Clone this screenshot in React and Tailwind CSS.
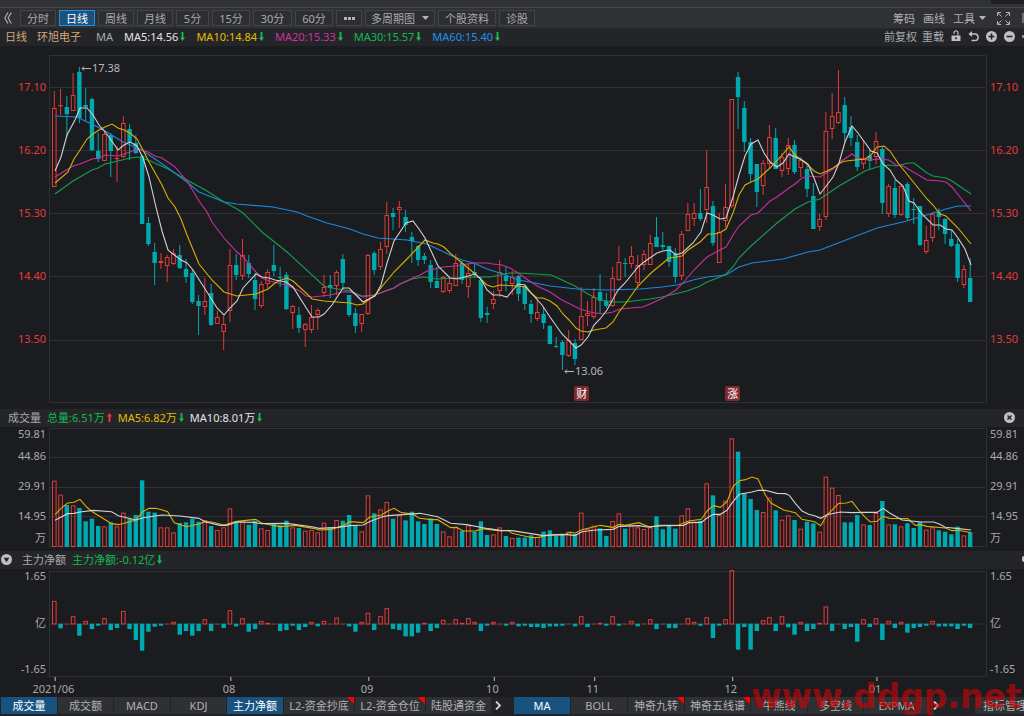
import React from "react";

const RED = "#e23b38";
const TEAL = "#00a9af";

// [rising, high, body top, body bottom, low]
const CANDLES = [
  [1, 91, 108, 187, 187], [1, 89, 105, 106, 115], [0, 96, 107, 114, 137], [1, 73, 95, 111, 111], [0, 67, 72, 118, 123],
  [0, 88, 105, 107, 121], [0, 98, 99, 150, 151], [0, 133, 151, 159, 162], [1, 132, 134, 161, 161], [0, 133, 135, 151, 177],
  [1, 146, 158, 159, 182], [1, 116, 123, 157, 158], [0, 124, 129, 143, 160], [0, 135, 143, 153, 154], [0, 155, 156, 224, 224],
  [0, 217, 223, 244, 246], [0, 243, 252, 263, 285], [1, 253, 261, 263, 269], [1, 255, 257, 266, 282], [1, 249, 253, 264, 265],
  [0, 245, 255, 268, 269], [0, 259, 269, 277, 283], [0, 269, 273, 302, 304], [0, 295, 301, 306, 335], [1, 278, 301, 307, 315],
  [0, 284, 293, 325, 326], [1, 311, 317, 324, 324], [1, 316, 324, 332, 350], [1, 249, 265, 311, 322], [0, 254, 265, 275, 280],
  [1, 239, 255, 276, 280], [0, 255, 263, 274, 278], [0, 273, 280, 299, 310], [1, 281, 284, 306, 308], [1, 269, 272, 284, 288],
  [0, 245, 265, 271, 276], [0, 267, 277, 278, 287], [0, 272, 275, 309, 310], [1, 305, 306, 313, 329], [0, 307, 315, 328, 333],
  [1, 323, 324, 330, 347], [1, 305, 317, 330, 333], [1, 308, 310, 315, 330], [1, 275, 287, 293, 297], [0, 275, 285, 288, 298],
  [1, 270, 272, 286, 295], [0, 254, 259, 283, 289], [0, 295, 295, 315, 317], [0, 308, 313, 326, 333], [1, 314, 314, 324, 332],
  [1, 254, 255, 314, 315], [0, 251, 253, 270, 275], [1, 242, 249, 267, 270], [1, 202, 215, 247, 254], [0, 208, 213, 217, 230],
  [1, 201, 207, 210, 228], [0, 210, 217, 225, 232], [0, 232, 237, 241, 263], [0, 245, 246, 260, 266], [0, 253, 256, 260, 264],
  [0, 260, 265, 282, 288], [0, 267, 281, 288, 288], [1, 276, 277, 292, 293], [1, 277, 283, 291, 293], [1, 254, 263, 286, 286],
  [0, 261, 263, 280, 284], [1, 263, 273, 287, 298], [0, 263, 272, 274, 278], [0, 277, 280, 318, 322], [0, 307, 313, 315, 323],
  [1, 291, 299, 304, 309], [1, 260, 272, 291, 297], [0, 267, 276, 281, 291], [1, 271, 277, 284, 295], [0, 275, 276, 294, 301],
  [0, 285, 286, 304, 310], [0, 300, 304, 314, 323], [1, 300, 312, 319, 321], [0, 307, 314, 323, 329], [0, 325, 326, 344, 344],
  [0, 337, 346, 347, 348], [0, 340, 342, 355, 370], [1, 330, 340, 356, 357], [0, 339, 343, 359, 365], [1, 287, 316, 340, 340],
  [1, 301, 313, 316, 326], [1, 288, 297, 317, 319], [0, 274, 292, 301, 314], [0, 293, 301, 306, 308], [1, 267, 278, 306, 307],
  [1, 246, 262, 280, 281], [0, 258, 263, 264, 277], [1, 246, 256, 264, 268], [1, 255, 265, 283, 288], [1, 250, 254, 265, 270],
  [1, 235, 243, 265, 265], [0, 217, 237, 247, 247], [0, 232, 245, 247, 250], [0, 246, 246, 262, 267], [0, 248, 253, 277, 283],
  [1, 231, 234, 276, 280], [1, 203, 214, 231, 231], [1, 203, 213, 219, 226], [0, 189, 213, 219, 221], [1, 150, 187, 210, 223],
  [0, 201, 206, 243, 246], [1, 213, 232, 263, 263], [1, 184, 207, 221, 227], [1, 99, 99, 206, 208], [0, 72, 77, 97, 129],
  [0, 101, 108, 142, 152], [0, 138, 142, 174, 182], [0, 164, 164, 192, 207], [1, 160, 163, 186, 195], [1, 125, 137, 164, 169],
  [0, 128, 138, 169, 169], [1, 153, 157, 171, 177], [1, 138, 145, 169, 175], [0, 140, 145, 172, 174], [1, 157, 160, 168, 177],
  [0, 165, 169, 189, 197], [0, 183, 196, 229, 229], [1, 214, 219, 227, 231], [1, 112, 131, 217, 220], [1, 93, 116, 129, 139],
  [1, 70, 112, 123, 124], [0, 97, 105, 133, 142], [0, 116, 127, 138, 146], [0, 135, 142, 167, 171], [1, 140, 159, 164, 169],
  [0, 150, 156, 161, 170], [1, 132, 141, 157, 164], [0, 146, 149, 203, 214], [1, 184, 186, 214, 217], [0, 180, 188, 215, 218],
  [1, 184, 186, 215, 216], [0, 182, 184, 218, 220], [0, 198, 209, 210, 224], [0, 206, 206, 245, 246], [1, 226, 240, 252, 254],
  [1, 212, 214, 238, 242], [0, 208, 212, 217, 230], [0, 218, 219, 234, 244], [0, 230, 239, 246, 247], [0, 239, 244, 278, 282],
  [1, 265, 269, 285, 288], [0, 258, 278, 302, 302],
];

// tops of the volume bars, three units to a pixel
const VOLUMES = [
  227, 269, 300, 301, 309, 349, 341, 363, 364, 352, 364, 323, 341, 330, 226, 320, 323, 367, 367, 382,
  354, 352, 341, 350, 345, 363, 375, 367, 310, 349, 348, 359, 347, 370, 375, 356, 361, 347, 367, 369,
  377, 375, 382, 353, 367, 345, 347, 330, 361, 379, 271, 325, 313, 291, 341, 330, 346, 320, 349, 357,
  340, 357, 379, 394, 367, 378, 361, 380, 349, 390, 388, 367, 393, 399, 398, 398, 391, 396, 380, 376,
  392, 390, 380, 387, 323, 371, 362, 370, 393, 348, 325, 371, 362, 367, 372, 367, 334, 373, 360, 371,
  331, 310, 350, 347, 235, 271, 330, 287, 100, 140, 265, 282, 315, 321, 278, 316, 344, 331, 345, 371,
  350, 355, 380, 215, 248, 270, 352, 352, 330, 358, 360, 324, 288, 358, 358, 364, 355, 369, 351, 374,
  367, 376, 380, 388, 365, 391, 382,
];

// net inflow bars, three units to a pixel, 0 and above are red
const FLOWS = [
  68, -14, 0, 22, -36, 8, -16, -6, 16, -19, -13, 38, -16, -49, -81, -24, -9, -5, 0, 5,
  -33, -22, -36, -22, 13, -22, 0, -13, 40, -8, 16, -24, -16, 8, 2, 0, -22, -19, -5, -19,
  -10, 5, -8, 8, 0, 18, 0, -8, -24, 5, 32, -19, 22, 46, -16, -19, -38, -38, -27, 2,
  -22, -13, 11, 0, 13, 2, 16, 5, -22, -5, 5, 0, -5, 5, -8, -6, -10, -10, -13, -8,
  -8, -5, 0, -8, 22, -10, 0, 2, -5, 22, -5, 0, 8, -8, 0, 13, -16, 0, -13, -13,
  0, 16, 5, -5, 19, -43, -5, 13, 160, -78, -10, -78, -22, 10, 19, -22, 22, -11, -33, 5,
  -22, -16, 2, 51, -22, 0, -16, -10, -54, 13, -10, 16, -49, 8, -13, 5, -27, -13, -10, -5,
  8, -8, -8, -8, -16, -5, -13,
];

const PRICE_LINES = [
  { color: "#12a14b", points: "55,194 73,181 80,177 92,170 98,168 105,164 118,161 130,158 137,157 148,160 168,169 187,180 207,191 224,202 237,209 243,213 262,232 287,252 324,286 332,288 350,291 362,296 375,295 394,288 400,284 412,279 423,277 437,279 474,277 490,277 500,275 510,273 518,273 535,274 551,275 562,280 575,286 588,294 600,300 613,302 625,302 650,299 662,297 687,291 700,286 707,282 720,277 726,274 733,267 739,258 751,246 777,223 795,209 808,202 820,199 839,186 865,171 877,167 889,165 896,166 908,163 914,163 927,173 933,176 946,178 952,181 971,194" },
  { color: "#1e87dc", points: "55,116 77,117 85,121 92,124 105,131 123,142 140,149 155,159 168,168 187,182 199,192 224,202 237,204 273,207 297,212 307,216 327,223 350,229 363,234 378,238 407,240 427,244 450,255 462,260 474,263 487,269 503,274 518,280 530,282 550,286 577,289 607,290 640,289 662,287 677,285 693,280 707,277 726,275 739,267 752,263 783,259 808,252 820,250 846,240 877,228 903,222 920,217 946,209 958,206 971,206" },
  { color: "#c9309c", points: "55,177 68,169 73,166 80,164 92,159 99,158 105,155 118,156 130,152 137,149 148,152 155,156 162,158 175,167 187,181 199,201 207,212 212,222 224,238 237,252 243,257 256,272 262,278 269,281 286,285 300,291 306,296 313,297 330,295 342,292 350,292 363,297 375,295 385,291 394,288 400,284 413,278 420,275 427,271 443,267 455,266 474,263 487,263 493,264 502,265 510,268 518,273 531,282 537,286 550,292 562,300 580,309 590,312 602,314 613,312 620,309 630,308 643,307 650,304 663,298 676,290 682,284 694,270 707,257 720,250 726,247 733,235 739,226 751,215 758,213 770,201 777,197 789,188 795,184 802,178 808,176 820,177 833,169 840,162 852,154 858,158 871,160 877,159 889,160 896,165 903,166 927,180 940,181 946,182 952,187 971,211" },
  { color: "#d9b000", points: "55,183 68,172 74,159 80,150 87,139 93,134 99,130 105,127 112,124 118,128 124,130 130,133 137,139 143,150 149,162 162,185 168,198 175,207 181,219 187,235 199,264 212,280 224,292 237,296 256,294 268,289 275,283 281,280 287,278 293,281 305,292 312,299 324,301 350,303 357,305 363,304 375,295 394,272 407,259 425,240 433,243 438,244 444,247 450,253 462,263 474,273 487,285 493,287 500,285 518,286 525,287 530,292 537,298 543,298 550,301 557,306 563,314 569,320 576,328 581,331 588,332 594,330 606,328 613,322 619,312 626,303 638,286 651,273 669,258 676,257 682,256 688,250 700,242 708,234 715,234 721,232 726,229 733,213 739,195 745,185 751,182 758,179 770,168 783,154 789,147 795,155 808,165 814,171 820,174 827,171 833,168 842,162 846,161 865,159 871,155 877,147 884,146 890,151 898,163 927,199 933,205 940,214 946,216 958,228 971,244" },
  { color: "#d2d2d2", points: "55,171 61,157 67,135 75,120 80,108 87,108 93,115 99,125 106,133 111,140 118,150 124,145 130,142 137,146 143,158 149,177 155,203 162,231 168,250 173,254 181,260 187,263 193,270 207,292 217,308 224,315 230,308 237,301 243,288 256,274 262,277 269,278 275,280 286,282 293,287 305,306 312,317 319,317 324,314 332,305 343,288 349,288 355,294 363,302 369,299 375,296 381,285 387,263 394,241 406,223 413,221 419,229 425,238 432,253 438,266 450,278 457,279 468,276 475,274 481,279 487,290 493,295 500,295 507,297 513,290 518,284 525,285 531,293 542,305 550,317 562,334 576,348 581,345 588,337 594,325 600,319 607,310 618,290 625,283 638,267 644,262 657,253 663,251 670,250 676,255 682,253 693,243 701,232 707,213 713,215 720,219 726,218 733,197 739,175 745,156 751,144 758,140 764,153 770,162 777,167 783,163 789,154 795,157 802,160 808,164 814,178 820,194 827,185 833,177 839,163 845,142 852,126 858,133 871,151 877,153 883,164 890,170 896,180 903,186 909,201 914,203 921,213 933,225 940,225 946,229 952,230 958,238 965,249 971,265" },
];

const VOLUME_LINES = [
  {
    color: "#d9b000",
    left: "165,329 183,310 203,294 222,292 240,283 260,306 278,321 335,356 355,359 375,354 408,345 428,320 447,310 467,310 485,314 503,320 523,353 560,365 597,357 615,350 635,351 672,360 710,349 767,343 785,354 823,362 842,365 885,361 940,370 957,375 995,373 1033,360 1050,350 1090,353 1108,337 1145,330 1165,317 1182,310 1202,322 1240,328 1258,340 1295,344 1313,344 1352,368 1370,367 1390,378 1428,378 1445,371 1503,378 1525,376 1536,385",
    right: "0,385 60,398 80,397 115,389 155,390 175,382 190,384 210,374 265,361 303,367 322,358 340,361 380,353 415,367 435,361 500,360 530,348 568,343 588,315 605,302 625,307 645,290 663,245 682,227 700,224 720,216 738,222 760,270 777,294 815,315 850,323 870,343 908,350 926,362 945,330 962,313 980,295 1003,294 1020,289 1040,315 1060,337 1075,351 1095,349 1113,334 1133,340 1187,341 1210,361 1227,359 1245,364 1300,369 1320,377 1340,376 1377,383",
  },
  {
    color: "#d2d2d2",
    left: "165,346 203,326 222,325 240,321 280,316 335,320 355,332 408,345 430,338 485,330 540,333 597,340 615,350 660,361 680,361 710,351 760,352 785,356 862,355 940,366 957,370 1015,367 1050,362 1090,360 1108,350 1145,336 1165,332 1260,325 1313,335 1352,355 1400,359 1465,371 1500,376 1536,377",
    right: "0,377 95,392 150,388 190,391 210,380 250,375 303,373 322,364 380,362 405,366 455,362 515,361 530,353 568,352 588,337 605,328 625,328 645,316 663,290 682,268 720,261 740,256 760,256 795,265 820,266 832,271 850,295 870,318 890,328 908,332 926,340 945,329 985,321 1020,323 1060,322 1095,322 1113,310 1133,324 1170,345 1227,351 1265,351 1282,357 1300,367 1340,371 1377,375",
  },
];

const MONTHS = [
  { label: "2021/06", index: 0 },
  { label: "08", index: 28 },
  { label: "09", index: 50 },
  { label: "10", index: 70 },
  { label: "11", index: 86 },
  { label: "12", index: 108 },
  { label: "01", index: 131 },
];

const PRICE_TICKS = ["17.10", "16.20", "15.30", "14.40", "13.50"];

const barX = (i) => 54.3 + i * 6.273;

const Arrow = ({ up }) => (
  <svg
    className={up ? "ml-[2px] h-[9px] w-[5px]" : "ml-[2px] h-[9px] w-[5px] rotate-180"}
    viewBox="0 0 5 9"
    fill={up ? "#ff3b30" : "#14c24a"}
  >
    <path d="M2.5 0 5 3.600H3.400V9H1.600V3.600H0z" />
  </svg>
);

const Caret = () => (
  <svg className="h-[4px] w-[7px]" viewBox="0 0 7 4" fill="#b4b4b7">
    <path d="M0 0h7L3.5 4z" />
  </svg>
);

const Reading = ({ className, up, children }) => (
  <span className={`mr-[11px] flex items-center ${className}`}>
    {children}
    <Arrow up={up} />
  </span>
);

const PeriodButton = ({ active, className = "w-[36px]", children }) => (
  <button
    className={`flex h-[16px] shrink-0 items-center justify-center gap-[7px] border ${className} ${
      active ? "border-[#2090e6] bg-[#1b527c] text-white" : "border-[#424347] bg-[#2d2e32]"
    }`}
  >
    {children}
  </button>
);

const Tab = ({ active, flag, className = "w-[56px]", children }) => (
  <button
    className={`relative flex h-[17px] shrink-0 items-center justify-center whitespace-nowrap ${className} ${
      active ? "bg-[#185380] text-white" : "bg-[#2f3034] text-[#b0b0b3]"
    }`}
  >
    {children}
    {flag && (
      <svg className="absolute top-0 right-0 h-[7px] w-[7px]" viewBox="0 0 7 7" fill="#ff0000">
        <path d="M0 0h7v7z" />
      </svg>
    )}
  </button>
);

const PriceAxis = ({ className }) => (
  <div className={`flex shrink-0 flex-col text-[#e23b38] ${className}`}>
    {PRICE_TICKS.map((t) => (
      <span key={t} className="flex h-[63px] items-center">{t}</span>
    ))}
  </div>
);

const VolumeAxis = ({ className }) => (
  <div className={`flex shrink-0 flex-col ${className}`}>
    <span className="flex h-[12px] items-center">59.81</span>
    <span className="flex h-[32px] items-center">44.86</span>
    <span className="flex h-[28px] items-center">29.91</span>
    <span className="flex h-[32px] items-center">14.95</span>
    <span className="flex h-[12px] items-center">万</span>
  </div>
);

const FlowAxis = ({ className }) => (
  <div className={`flex h-[105px] shrink-0 flex-col justify-between leading-[12px] ${className}`}>
    <span>1.65</span>
    <span>亿</span>
    <span>-1.65</span>
  </div>
);

const PriceChart = () => (
  <svg className="block h-[348px] w-full" viewBox="49 55 938 348" preserveAspectRatio="none">
    <g stroke="#303135" fill="none">
      <path d="M49.5 402.5V55.5H985M49 402.5H985M986.5 55V403" />
      <path d="M49 87.5H985M49 150.5H985M49 213.5H985M49 276.5H985M49 340.5H985" />
    </g>
    {CANDLES.map(([rising, high, top, bottom, low], i) => {
      const x = barX(i);
      const color = rising ? RED : TEAL;
      return (
        <g key={i} stroke={color}>
          <path d={`M${x} ${high}V${top}M${x} ${bottom}V${low}`} />
          {rising ? (
            <rect x={x - 1.8} y={top + 0.5} width="3.6" height={Math.max(bottom - top - 1, 0.2)} fill="none" />
          ) : (
            <rect x={x - 2.2} y={top} width="4.4" height={Math.max(bottom - top, 1)} fill={color} stroke="none" />
          )}
        </g>
      );
    })}
    {PRICE_LINES.map((line) => (
      <polyline key={line.color} points={line.points} fill="none" stroke={line.color} strokeWidth="1.1" />
    ))}
  </svg>
);

const VolumeChart = () => (
  <svg className="block h-[120px] w-full" viewBox="147 66 2814 360" preserveAspectRatio="none">
    <g stroke="#303135" strokeWidth="3" fill="none">
      <path d="M148.5 424.5V70.5H2955M147 424.5H2955M2959.5 69V426" />
      <path d="M147 157.5H2955M147 247.5H2955M147 334.5H2955" />
    </g>
    {VOLUMES.map((top, i) => {
      const x = barX(i) * 3;
      return CANDLES[i][0] ? (
        <rect key={i} x={x - 5.4} y={top + 1.5} width="10.8" height={423 - top} fill="none" stroke={RED} strokeWidth="3" />
      ) : (
        <rect key={i} x={x - 6.6} y={top} width="13.2" height={426 - top} fill={TEAL} />
      );
    })}
    {VOLUME_LINES.map((line) => (
      <g key={line.color} fill="none" stroke={line.color} strokeWidth="3.3">
        <polyline points={line.left} />
        <polyline points={line.right} transform="translate(1536 0)" />
      </g>
    ))}
  </svg>
);

const FlowChart = () => (
  <svg className="block h-[112px] w-full" viewBox="49 570 938 112" preserveAspectRatio="none">
    <path
      d="M49.5 677V571.5H985M49 676.5H985M986.5 571V677M49 624H985"
      stroke="#303135"
      fill="none"
    />
    {FLOWS.map((v, i) => {
      const x = barX(i);
      const h = Math.abs(v) / 3;
      if (v < 0) return <rect key={i} x={x - 2.2} y="623.7" width="4.4" height={Math.max(h, 2)} fill={TEAL} />;
      return (
        <rect
          key={i}
          x={x - 1.8}
          y={624 - h}
          width="3.6"
          height={Math.max(h, 0.1)}
          fill="none"
          stroke={RED}
          strokeOpacity={v ? 1 : 0.6}
        />
      );
    })}
    {MONTHS.map((m) => (
      <path key={m.label} d={`M${barX(m.index) + 0.9} 677v4`} stroke="#c4c4c6" />
    ))}
  </svg>
);

const PriceMark = ({ className, children }) => (
  <span className={`absolute flex items-center gap-px leading-[14px] text-[#b8b8bb] ${className}`}>
    <svg className="h-[5px] w-[10px]" viewBox="0 0 10 5" fill="none" stroke="#b8b8bb">
      <path d="M10 2.5H1M3 .5l-2 2 2 2" />
    </svg>
    {children}
  </span>
);

const EventBadge = ({ className, children }) => (
  <span
    className={`absolute flex h-[15px] w-[15px] items-center justify-center rounded-[2px] bg-[#7e2a2c] text-white ${className}`}
  >
    {children}
  </span>
);

const IconButton = ({ label, className = "", children }) => (
  <button aria-label={label} className={`flex shrink-0 items-center justify-center ${className}`}>
    {children}
  </button>
);

export default function App() {
  return (
    <div className="relative w-full overflow-hidden bg-[#1b1c20] font-['Noto_Sans','Noto_Sans_CJK_SC',sans-serif] text-[11px] leading-none text-[#a9a9ac]">
      <div className="flex h-[8px] items-start justify-end border-b border-[#48494d] bg-[#313236]">
        <div className="h-[4px] w-[33px] bg-[#1d1e22]" />
      </div>

      <nav className="flex h-[20px] items-center bg-[#303135] pl-[4px]">
        <IconButton label="收起" className="mr-[8px]">
          <svg className="h-[12px] w-[8px]" viewBox="0 0 8 12" fill="none" stroke="#b4b4b7" strokeWidth="1.1">
            <path d="M4 .5.8 6 4 11.5M7.300.5 4.100 6l3.200 5.500" />
          </svg>
        </IconButton>
        <div className="flex gap-[3px]">
          <PeriodButton>分时</PeriodButton>
          <PeriodButton active>日线</PeriodButton>
          <PeriodButton>周线</PeriodButton>
          <PeriodButton>月线</PeriodButton>
          <PeriodButton className="w-[33px]">5分</PeriodButton>
          <PeriodButton className="w-[38px]">15分</PeriodButton>
          <PeriodButton className="w-[39px]">30分</PeriodButton>
          <PeriodButton className="w-[38px]">60分</PeriodButton>
          <PeriodButton className="w-[26px]">
            <svg className="h-[3px] w-[11px]" viewBox="0 0 11 3" fill="#b4b4b7">
              <path d="M0 0h3v3H0zM4 0h3v3H4zM8 0h3v3H8z" />
            </svg>
          </PeriodButton>
          <PeriodButton className="w-[70px]">多周期图 <Caret /></PeriodButton>
          <PeriodButton className="w-[58px]">个股资料</PeriodButton>
          <PeriodButton>诊股</PeriodButton>
        </div>
        <div className="ml-auto flex items-center gap-[8px] text-[#b0b0b3]">
          <button>筹码</button>
          <button>画线</button>
          <button className="flex items-center gap-[4px]">工具 <Caret /></button>
          <IconButton label="全屏" className="ml-[3px]">
            <svg className="h-[13px] w-[13px]" viewBox="0 0 13 13" fill="none" stroke="#b4b4b7">
              <path d="M.5 4V.5H4M9 .5h3.500V4M.5 9v3.500H4M12.500 9v3.500H9M1 1l3.500 3.500M12 1 8.500 4.500M1 12l3.500-3.500M12 12 8.500 8.500" />
            </svg>
          </IconButton>
          <span className="ml-[4px] h-[10px] w-[2px] bg-[#6d6e72]" />
        </div>
      </nav>

      <div className="flex h-[18px] items-center bg-[#242529] pb-[2px] pl-[5px]">
        <span className="mr-[10px] text-[#d3a878]">日线</span>
        <span className="mr-[15px] text-[#d3a878]">环旭电子</span>
        <span className="mr-[11px]">MA</span>
        <Reading className="text-[#e4e4e4]">MA5:14.56</Reading>
        <Reading className="text-[#e6bd00]">MA10:14.84</Reading>
        <Reading className="text-[#cf31a2]">MA20:15.33</Reading>
        <Reading className="text-[#17b84e]">MA30:15.57</Reading>
        <Reading className="text-[#1f92ee]">MA60:15.40</Reading>
        <div className="ml-auto flex items-center gap-[7px]">
          <div className="flex gap-[5px]">
            <button>前复权</button>
            <button>重载</button>
          </div>
          <IconButton label="锁定">
            <svg className="h-[12px] w-[10px]" viewBox="0 0 10 12" fill="#c0c0c3">
              <path d="M.5 5.500h9V11h-9z" />
              <path d="M3 4V2.800a2 2 0 0 1 4 0V5.500" fill="none" stroke="#c0c0c3" strokeWidth="1.2" />
              <circle cx="5" cy="8.2" r="1" fill="#242529" />
            </svg>
          </IconButton>
          <IconButton label="撤销">
            <svg className="h-[11px] w-[11px]" viewBox="0 0 11 11" fill="none" stroke="#c0c0c3" strokeWidth="1.5">
              <path d="M2 3h4.800a3.300 3.300 0 0 1 0 6.600H3.500" />
              <path d="M4 0v6L.5 3z" fill="#c0c0c3" stroke="none" />
            </svg>
          </IconButton>
          <IconButton label="放大">
            <svg className="h-[11px] w-[11px]" viewBox="0 0 11 11">
              <circle cx="5.5" cy="5.5" r="5.5" fill="#c0c0c3" />
              <path d="M2.500 5.500h6M5.500 2.500v6" stroke="#242529" strokeWidth="1.6" />
            </svg>
          </IconButton>
          <IconButton label="缩小">
            <svg className="h-[11px] w-[11px]" viewBox="0 0 11 11">
              <circle cx="5.5" cy="5.5" r="5.5" fill="#c0c0c3" />
              <path d="M2.500 5.500h6" stroke="#242529" strokeWidth="1.6" />
            </svg>
          </IconButton>
          <span className="h-[3px] w-[2px] bg-[#8a8b8e]" />
        </div>
      </div>

      <section className="flex pt-[9px] pb-[6px]">
        <PriceAxis className="w-[49px] items-end pr-[3px]" />
        <div className="relative min-w-0 flex-1">
          <PriceChart />
          <PriceMark className="top-[6px] left-[3.4%]">17.38</PriceMark>
          <PriceMark className="top-[309px] left-[54.9%]">13.06</PriceMark>
          <EventBadge className="top-[331px] left-[56%]">财</EventBadge>
          <EventBadge className="top-[331px] left-[72.1%]">涨</EventBadge>
        </div>
        <PriceAxis className="w-[37px] pl-[3px]" />
      </section>

      <div className="flex h-[18px] items-center bg-[#242529] pr-[9px] pb-[2px] pl-[8px]">
        <span className="mr-[6px]">成交量</span>
        <span className="mr-[6px] flex items-center text-[#17b84e]">总量:6.51万<Arrow up /></span>
        <span className="mr-[6px] flex items-center text-[#e6bd00]">MA5:6.82万<Arrow /></span>
        <span className="flex items-center text-[#e4e4e4]">MA10:8.01万<Arrow /></span>
        <IconButton label="关闭" className="ml-auto">
          <svg className="h-[11px] w-[11px]" viewBox="0 0 11 11">
            <circle cx="5.5" cy="5.5" r="5.5" fill="#c0c0c3" />
            <path d="m3.500 3.500 4 4M7.500 3.500l-4 4" stroke="#242529" strokeWidth="1.6" />
          </svg>
        </IconButton>
      </div>

      <section className="flex pb-[4px]">
        <VolumeAxis className="w-[49px] items-end pr-[3px]" />
        <div className="min-w-0 flex-1">
          <VolumeChart />
        </div>
        <VolumeAxis className="w-[37px] pl-[3px]" />
      </section>

      <div className="flex h-[18px] items-center bg-[#242529] pb-[2px] pl-px">
        <IconButton label="展开" className="mr-[10px]">
          <svg className="h-[11px] w-[11px]" viewBox="0 0 11 11">
            <circle cx="5.5" cy="5.5" r="5.5" fill="#c0c0c3" />
            <path d="M2.600 3.800h5.800L5.500 8.200z" fill="#242529" />
          </svg>
        </IconButton>
        <span className="mr-[6px]">主力净额</span>
        <span className="flex items-center text-[#17b84e]">主力净额:-0.12亿<Arrow /></span>
        <span className="ml-auto h-[6px] w-[2px] rounded-l bg-[#c0c0c3]" />
      </div>

      <section className="flex pt-px">
        <FlowAxis className="w-[49px] items-end pr-[3px]" />
        <div className="relative min-w-0 flex-1 pb-[15px]">
          <FlowChart />
          {MONTHS.map((m) => (
            <span
              key={m.label}
              className="absolute bottom-px -translate-x-1/2 leading-[14px]"
              style={{ left: `${((barX(m.index) - 50) / 938) * 100}%` }}
            >
              {m.label}
            </span>
          ))}
        </div>
        <FlowAxis className="w-[37px] pl-[3px]" />
      </section>

      <footer className="relative flex h-[19px] items-start overflow-hidden bg-[#222327] pl-px">
        <div className="flex shrink-0 gap-px">
          <Tab active>成交量</Tab>
          <Tab className="w-[55px]">成交额</Tab>
          <Tab>MACD</Tab>
          <Tab className="w-[55px]">KDJ</Tab>
          <Tab active>主力净额</Tab>
          <Tab flag className="w-[70px]">L2-资金抄底</Tab>
          <Tab flag className="w-[70px]">L2-资金仓位</Tab>
          <Tab className="w-[65px]">陆股通资金</Tab>
        </div>
        <IconButton label="更多指标" className="h-[17px] w-[14px]">
          <svg className="h-[9px] w-[6px]" viewBox="0 0 6 9" fill="none" stroke="#d4d4d6" strokeWidth="1.8">
            <path d="m1 .5 4 4-4 4" />
          </svg>
        </IconButton>
        <div className="ml-[9px] flex shrink-0 gap-px">
          <Tab active>MA</Tab>
          <Tab>BOLL</Tab>
          <Tab flag>神奇九转</Tab>
          <Tab flag className="w-[65px]">神奇五线谱</Tab>
          <Tab>牛熊线</Tab>
          <Tab className="w-[55px]">多空线</Tab>
          <Tab className="w-[65px]">EXPMA</Tab>
        </div>
        <IconButton label="更多主图指标" className="h-[17px] w-[14px]">
          <svg className="h-[9px] w-[6px]" viewBox="0 0 6 9" fill="none" stroke="#d4d4d6" strokeWidth="1.8">
            <path d="m1 .5 4 4-4 4" />
          </svg>
        </IconButton>
        <div className="ml-auto w-[49px] shrink-0 overflow-hidden">
          <Tab className="w-[60px]">指标管理</Tab>
        </div>
      </footer>

      <div className="pointer-events-none absolute right-0 bottom-0 w-[273px] overflow-hidden font-['DejaVu_Sans',sans-serif] text-[33px] leading-[38px] font-bold whitespace-nowrap text-[#c80505]/65">
        www.ddgp.net
      </div>
    </div>
  );
}
